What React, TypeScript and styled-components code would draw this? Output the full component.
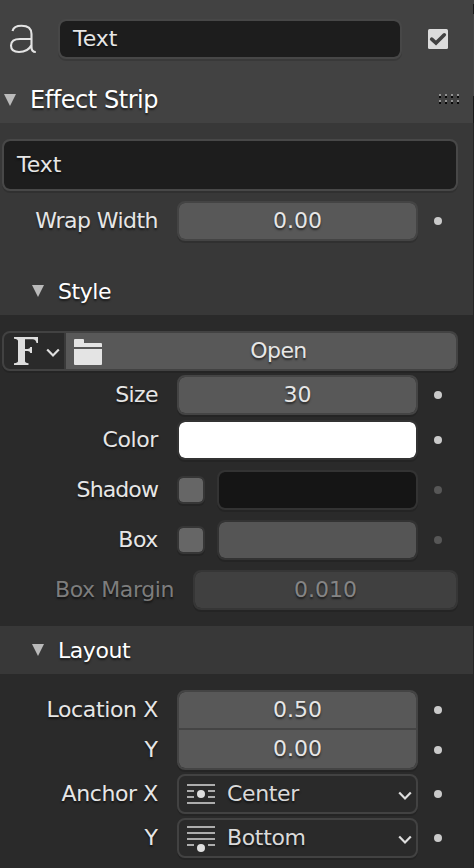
import React from "react";
import styled, { createGlobalStyle, css } from "styled-components";

const GlobalStyle = createGlobalStyle`
  *, *::before, *::after { box-sizing: border-box; }
  html, body { margin: 0; background: #2a2a2a; overflow: hidden; }
`;

const Panel = styled.main`
  display: flex;
  width: 474px;
  height: 868px;
  color: #e6e6e6;
  background: #2a2a2a;
  font: 22px/26px "DejaVu Sans", sans-serif;
  text-shadow: 0 2px 2px rgba(0, 0, 0, 0.55);
  white-space: nowrap;
`;

const Content = styled.div`
  width: 473px;
`;

const Edge = styled.div`
  width: 1px;
  background: linear-gradient(#424242 4px, #191919 4px 14px, #464646 14px 96px, #191919 96px 123px, #252525 123px);
`;

const Header = styled.header`
  height: 123px;
  background: #424242;
`;

const NameRow = styled.div`
  display: flex;
  align-items: center;
  height: 78px;
  padding-left: 8px;

  > svg:last-child { margin-left: 26px; }
`;

const NameIcon = styled.svg`
  width: 30px;
  height: 34px;
  margin-right: 20px;
`;

const TextInput = styled.div<{ $height: number; $width: number; $border: string }>`
  display: flex;
  align-items: center;
  width: ${(p) => p.$width}px;
  height: ${(p) => p.$height}px;
  padding-left: 13px;
  border: 2px solid ${(p) => p.$border};
  border-radius: 8px;
  background: #1d1d1d;
  background-clip: padding-box;
  box-shadow: 0 2px 0 rgba(0, 0, 0, 0.13);
`;

const TitleRow = styled.div<{ $sub?: boolean }>`
  display: flex;
  align-items: center;
  height: ${(p) => (p.$sub ? 48 : 45)}px;
  padding: ${(p) => (p.$sub ? "0 0 0 32px" : "0 12px 2px 4px")};
  gap: 14px;
  color: #fff;
  font-size: ${(p) => (p.$sub ? 22 : 24)}px;
  letter-spacing: -0.45px;
  background: ${(p) => (p.$sub ? "#383838" : "#424242")};

  > span { padding-top: ${(p) => (p.$sub ? 2 : 0)}px; }
`;

const GripIcon = styled.svg`
  width: 22px;
  height: 10px;
  margin: 0 0 1px auto;
`;

const EffectBody = styled.section`
  display: flex;
  flex-direction: column;
  height: 144px;
  padding: 16px 0 0 2px;
  gap: 10px;
  background: #383838;
`;

const Body = styled.section<{ $height: number }>`
  height: ${(p) => p.$height}px;
  padding-top: 16px;
  background: #2a2a2a;
`;

const Row = styled.div<{ $top?: number; $flush?: boolean }>`
  display: flex;
  align-items: center;
  height: 40px;
  margin-top: ${(p) => p.$top ?? 0}px;
  margin-left: ${(p) => (p.$flush ? -2 : 0)}px;
`;

const Label = styled.span<{ $width?: number; $muted?: boolean; $tracking?: number }>`
  width: ${(p) => p.$width ?? 158}px;
  margin-right: 19px;
  text-align: right;
  letter-spacing: ${(p) => p.$tracking ?? -0.4}px;
  color: ${(p) => (p.$muted ? "#7d7d7d" : "#e6e6e6")};
`;

const controlFrame = css`
  border: 2px solid #424242;
  border-radius: 8px;
  background-clip: padding-box;
  box-shadow: 0 2px 0 rgba(0, 0, 0, 0.14);
`;

const NumberField = styled.div<{ $width?: number; $muted?: boolean }>`
  ${controlFrame}
  display: flex;
  align-items: center;
  justify-content: center;
  width: ${(p) => p.$width ?? 241}px;
  height: 40px;
  background-color: ${(p) => (p.$muted ? "#404040" : "#585858")};
  border-color: ${(p) => (p.$muted ? "#363636" : "#444")};
  color: ${(p) => (p.$muted ? "#858585" : "#e6e6e6")};
`;

const Swatch = styled.div<{ $color: string; $width?: number }>`
  ${controlFrame}
  width: ${(p) => p.$width ?? 241}px;
  height: 40px;
  border-color: #333;
  background-color: ${(p) => p.$color};
`;

const Checkbox = styled.div`
  ${controlFrame}
  width: 28px;
  height: 28px;
  margin-right: 12px;
  border-color: #363636;
  border-radius: 6px;
  background-color: #666;
`;

const Dot = styled.i<{ $muted?: boolean }>`
  width: 8px;
  height: 8px;
  margin-left: 16px;
  border-radius: 50%;
  background: ${(p) => (p.$muted ? "#575757" : "#cacaca")};
`;

const FontRow = styled.div`
  ${controlFrame}
  display: flex;
  width: 456px;
  height: 40px;
  margin-left: 2px;
  overflow: hidden;
`;

const FontPicker = styled.div`
  display: flex;
  align-items: center;
  width: 62px;
  padding-left: 10px;
  gap: 6.5px;
  border-right: 2px solid #3a3a3a;

  > svg:last-child { margin-top: 3px; }
`;

const OpenButton = styled.div`
  display: flex;
  flex: 1;
  align-items: center;
  padding-left: 8px;
  background: #585858;
  box-shadow: 0 -2px #363636, 0 2px #363636, 2px 0 #363636;

  > svg { margin-top: 2px; }
`;

const ButtonText = styled.span`
  flex: 1;
  padding-right: 1px;
  text-align: center;
  letter-spacing: -0.6px;
`;

const FieldStack = styled.div`
  ${controlFrame}
  width: 241px;
  height: 80px;
  background-color: #585858;
  border-color: #444;
`;

const StackedValue = styled.div`
  display: flex;
  align-items: center;
  justify-content: center;
  height: 36px;

  & + & {
    border-top: 2px solid #444;
    height: 40px;
  }
`;

const LocationGroup = styled.div`
  display: flex;
  align-items: flex-start;
`;

const Stack = styled.div`
  display: flex;
  flex-direction: column;
`;

const StackCell = styled.div`
  display: flex;
  align-items: center;
  height: 40px;
`;

const Select = styled.div`
  ${controlFrame}
  display: flex;
  align-items: center;
  width: 241px;
  height: 40px;
  padding: 0 5px 0 8px;
  color: #dadada;

  > svg:last-child { margin: 3px -0.5px 0 auto; }
`;

const SelectText = styled.span`
  margin-left: 12px;
  letter-spacing: -0.35px;
`;

const Triangle = () => (
  <svg width="12" height="12" viewBox="0 0 12 12">
    <path d="M0 0H12L6 12Z" fill="#bababa" />
  </svg>
);

const Chevron = () => (
  <svg width="14" height="10" viewBox="0 0 14 10" fill="none">
    <path d="M1.2 1.5 7 7.5 12.8 1.5" stroke="#dedede" strokeWidth="2.2" />
  </svg>
);

const Grip = () => (
  <GripIcon viewBox="0 0 22 10" shapeRendering="crispEdges">
    {[0, 6, 12, 18].map((x) =>
      [0, 6].map((y) => (
        <g key={`${x}-${y}`}>
          <rect x={x} y={y} width="2" height="2" fill="#929292" />
          <rect x={x} y={y + 2} width="2" height="2" fill="#080808" />
        </g>
      ))
    )}
  </GripIcon>
);

const SerifIcon = () => (
  <svg width="25" height="30" viewBox="0 0 25 30" fill="#dedede">
    <path d="M0 1H24V7H22.5Q22 3.2 18.5 3.2H11V13H13.5Q16 13 16.3 11H18V17H16.3Q16 15 13.5 15H11V25Q11 27 14.5 27.3V29H0V27.3Q4 27 4 25V5Q4 3 0 2.7Z" />
  </svg>
);

const Folder = () => (
  <svg width="28" height="26" viewBox="0 0 28 26" fill="#e4e4e4">
    <path d="M0 8V1Q0 0 1 0H9Q10 0 10 1V4H27Q28 4 28 5V8Z" />
    <path d="M0 10H28V25Q28 26 27 26H1Q0 26 0 25Z" />
  </svg>
);

const AnchorIcon = ({ bottom }: { bottom?: boolean }) => (
  <svg width="28" height="28" viewBox="0 0 28 28">
    <path
      d={
        bottom
          ? "M0 3H28M0 9H28M0 15H28M0 21H7M21 21H28"
          : "M0 5H28M0 11H7M21 11H28M0 17H7M21 17H28M0 23H28"
      }
      stroke="#adadad"
      strokeWidth="2"
    />
    <circle cx="14" cy={bottom ? 24 : 14} r="4" fill="#dedede" />
  </svg>
);

export default function App() {
  return (
    <>
      <GlobalStyle />
      <Panel>
        <Content>
          <Header>
            <NameRow>
              <NameIcon viewBox="0 0 30 34" fill="none">
                <path
                  d="M4.5 9C5.5 5.2 9 3.8 13.5 3.8Q23.5 3.8 23.5 12V25Q23.5 30 27.8 30M23.5 17H12Q3 17 3 23.5Q3 30 11 30Q20 30 23.5 23"
                  stroke="#e4e4e4"
                  strokeWidth="2.1"
                />
              </NameIcon>
              <TextInput $width={344} $height={40} $border="#474747">Text</TextInput>
              <svg width="20" height="20" viewBox="0 0 20 20">
                <rect width="20" height="20" rx="1.5" fill="#dcdcdc" />
                <path d="M3.7 10.2 8 14.1 16.3 5.8" fill="none" stroke="#424242" strokeWidth="3.6" strokeLinecap="round" />
              </svg>
            </NameRow>
            <TitleRow>
              <Triangle />
              <span>Effect Strip</span>
              <Grip />
            </TitleRow>
          </Header>

          <EffectBody>
            <TextInput $width={456} $height={52} $border="#484848">Text</TextInput>
            <Row $flush>
              <Label $tracking={-0.55}>Wrap Width</Label>
              <NumberField>0.00</NumberField>
              <Dot />
            </Row>
          </EffectBody>

          <TitleRow $sub><Triangle /><span>Style</span></TitleRow>
          <Body $height={311}>
            <FontRow>
              <FontPicker><SerifIcon /><Chevron /></FontPicker>
              <OpenButton><Folder /><ButtonText>Open</ButtonText></OpenButton>
            </FontRow>
            <Row $top={4}>
              <Label $tracking={-0.6}>Size</Label><NumberField>30</NumberField><Dot />
            </Row>
            <Row $top={5}>
              <Label>Color</Label><Swatch $color="#fff" /><Dot />
            </Row>
            <Row $top={10}>
              <Label $tracking={-0.9}>Shadow</Label><Checkbox /><Swatch $color="#151515" $width={201} /><Dot $muted />
            </Row>
            <Row $top={10}>
              <Label>Box</Label><Checkbox /><Swatch $color="#555" $width={201} /><Dot $muted />
            </Row>
            <Row $top={10}>
              <Label $width={174} $muted>Box Margin</Label><NumberField $width={265} $muted>0.010</NumberField>
            </Row>
          </Body>

          <TitleRow $sub><Triangle /><span>Layout</span></TitleRow>
          <Body $height={194}>
            <LocationGroup>
              <Stack>
                <StackCell><Label $tracking={-0.35}>Location X</Label></StackCell>
                <StackCell><Label $tracking={0}>Y</Label></StackCell>
              </Stack>
              <FieldStack>
                <StackedValue>0.50</StackedValue>
                <StackedValue>0.00</StackedValue>
              </FieldStack>
              <Stack>
                <StackCell><Dot /></StackCell>
                <StackCell><Dot /></StackCell>
              </Stack>
            </LocationGroup>
            <Row $top={4}>
              <Label>Anchor X</Label>
              <Select><AnchorIcon /><SelectText>Center</SelectText><Chevron /></Select>
              <Dot />
            </Row>
            <Row $top={4}>
              <Label $tracking={0}>Y</Label>
              <Select><AnchorIcon bottom /><SelectText>Bottom</SelectText><Chevron /></Select>
              <Dot />
            </Row>
          </Body>
        </Content>
        <Edge />
      </Panel>
    </>
  );
}
